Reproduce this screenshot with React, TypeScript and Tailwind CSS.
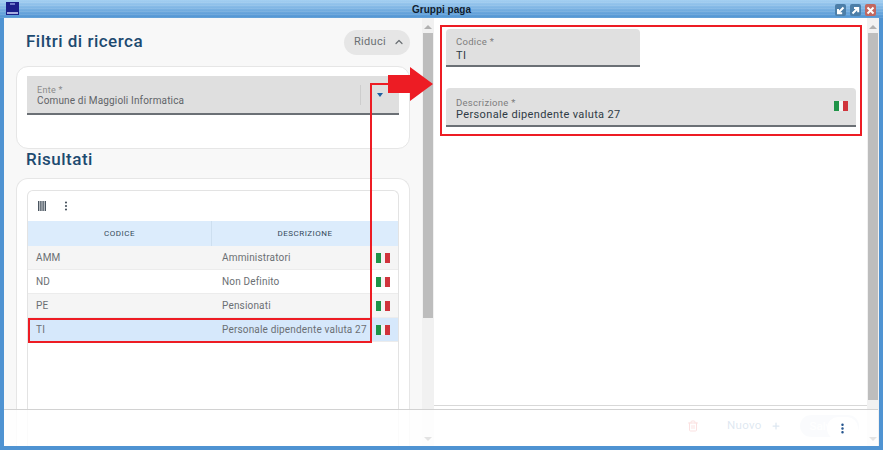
import { ChevronUp, Plus, Trash2, EllipsisVertical } from "lucide-react";

const rows = [
  { code: "AMM", desc: "Amministratori", bg: "bg-[#f5f5f5]" },
  { code: "ND", desc: "Non Definito", bg: "bg-white" },
  { code: "PE", desc: "Pensionati", bg: "bg-[#f5f5f5]" },
  { code: "TI", desc: "Personale dipendente valuta 27", bg: "bg-[#d6e8fb]" },
];

const Flag = () => (
  <div className="flex h-[10px] w-[14px] shrink-0">
    <div className="flex-1 bg-[#1f9448]" />
    <div className="flex-1 bg-[#f4f4f4]" />
    <div className="flex-1 bg-[#d0343c]" />
  </div>
);

const Thumb = ({ h }: { h: string }) => (
  <div className="flex w-[12px] shrink-0 flex-col bg-[#f1f1f1]">
    <div className="flex h-[15px] items-center justify-center pt-[2px]">
      <div className="h-0 w-0 border-x-[4px] border-b-[4px] border-x-transparent border-b-[#b0b0b0]" />
    </div>
    <div className={`${h} mx-[1px] bg-[#bdbdbd]`} />
    <div className="flex-1" />
    <div className="flex h-[14px] items-center justify-center">
      <div className="h-0 w-0 border-x-[4px] border-t-[4px] border-x-transparent border-t-[#444]" />
    </div>
  </div>
);

const Field = ({ label, value, className, flag, gap }: { label: string; value: string; className: string; flag?: boolean; gap?: string }) => (
  <div className={`relative rounded-t-[4px] border-b-2 border-[#6b7075] bg-[#e0e0e0] pl-[10px] ${className}`}>
    <div className={`text-[9.5px] leading-[11px] tracking-[0.3px] text-[#7d7d7d] ${gap ?? ""}`}>{label}</div>
    <div className="text-[11px] leading-[13px] tracking-[0.37px] text-[#2f3b45]">{value}</div>
    {flag && (
      <div className="absolute right-[8px] top-[13px]">
        <Flag />
      </div>
    )}
  </div>
);

const WinButton = ({ bg, d }: { bg: string; d: string }) => (
  <div className={`flex h-[12px] w-[11px] items-center justify-center rounded-[2px] ${bg}`}>
    <svg width="9" height="9" viewBox="0 0 9 9" fill="none" stroke="white" strokeWidth="2">
      <path d={d} />
    </svg>
  </div>
);

const App = () => {
  return (
    <div
      className="relative flex h-[450px] w-[883px] flex-col overflow-hidden bg-[#4f93d2]"
      style={{ fontFamily: "Roboto, 'Liberation Sans', sans-serif" }}
    >
      {/* title bar */}
      <div className="relative flex h-[18px] shrink-0 items-center justify-center bg-[repeating-linear-gradient(to_bottom,transparent_0px,transparent_2px,rgba(255,255,255,0.1)_2px,rgba(255,255,255,0.1)_3px),linear-gradient(to_bottom,#a5d0f2,#4f93d2)]">
        <div className="absolute left-[6px] top-[2px] flex h-[13px] w-[13px] flex-col items-center justify-between bg-[#1b1f8a] py-[1px]">
          <div className="h-[2px] w-[5px] bg-[#6f78c8]" />
          <div className="h-[2px] w-[11px] bg-[#a9aee0]" />
        </div>
        <span className="text-[10px] font-bold text-[#10202e]" style={{ fontFamily: "'Liberation Sans', sans-serif" }}>
          Gruppi paga
        </span>
        <div className="absolute right-[7px] top-[4px] flex gap-[4px]">
          <WinButton bg="bg-[#4c7ea8]" d="M7.5 1.5 2 7M2 3v4.2h4.2" />
          <WinButton bg="bg-[#4c7ea8]" d="M1.5 7.5 7 2M3 2h4.2v4.2" />
          <WinButton bg="bg-[#c2675f]" d="M1.5 1.5l6 6M7.5 1.5l-6 6" />
        </div>
      </div>

      {/* window body */}
      <div className="mx-[4px] mb-[4px] flex min-h-0 flex-1 bg-white">
        {/* left pane */}
        <div className="flex w-[418px] shrink-0 flex-col bg-[#f8f8f8] pl-[12px] pr-[12px]">
          <div className="flex h-[48px] shrink-0 items-center justify-between pl-[10px]">
            <h2 className="text-[17px] font-medium tracking-[0.5px] text-[#1d4a70]">Filtri di ricerca</h2>
            <div className="flex h-[25px] w-[66px] items-center gap-[7px] rounded-full bg-[#e6e6e6] pl-[10px] text-[11px] tracking-[0.3px] text-[#6a6f73]">
              Riduci
              <ChevronUp size={12} strokeWidth={2.4} />
            </div>
          </div>

          <div className="h-[83px] shrink-0 rounded-[12px] border border-[#e6e6e6] bg-white px-[10px] pt-[9px]">
            <div className="relative h-[39px] border-b-2 border-[#6b7075] bg-[#dfdfdf] pl-[10px] pt-[9px]">
              <div className="text-[9px] leading-[10px] tracking-[0.3px] text-[#8a8a8a]">Ente *</div>
              <div className="text-[10px] leading-[12px] tracking-[0.15px] text-[#5f6468]">Comune di Maggioli Informatica</div>
              <div className="absolute right-[38px] top-[9px] h-[20px] w-px bg-[#cdcdcd]" />
              <div className="absolute right-[16px] top-[17px] h-0 w-0 border-x-[3px] border-t-[4px] border-x-transparent border-t-[#1d5fa0]" />
            </div>
          </div>

          <h2 className="h-[29px] shrink-0 pl-[10px] text-[17px] font-medium leading-[20px] tracking-[0.5px] text-[#1d4a70]">Risultati</h2>

          <div className="flex-1 rounded-t-[12px] border border-b-0 border-[#e6e6e6] bg-white px-[10px] pt-[11px]">
            <div className="h-full rounded-t-[6px] border-x border-t border-[#e3e3e3]">
              <div className="flex h-[30px] items-center gap-[20px] pl-[10px] text-[#4a5560]">
                <svg width="8" height="10" viewBox="0 0 8 10" fill="currentColor">
                  <rect x="0" y="0" width="1.4" height="10" />
                  <rect x="2.2" y="0" width="1.4" height="10" />
                  <rect x="4.4" y="0" width="1.4" height="10" />
                  <rect x="6.6" y="0" width="1.4" height="10" />
                </svg>
                <EllipsisVertical size={12} strokeWidth={2.4} className="-ml-[6px]" />
              </div>
              <div className="grid h-[25px] grid-cols-[184px_1fr] items-center bg-[#dcecfc] text-[8px] tracking-[0.5px] text-[#34495a]">
                <div className="flex h-full items-center justify-center border-r border-[#cddff0]">CODICE</div>
                <div className="text-center">DESCRIZIONE</div>
              </div>
              {rows.map((r) => (
                <div key={r.code} className={`grid h-[24px] grid-cols-[186px_154px_1fr] items-center border-b border-[#ececec] pl-[8px] text-[10px] tracking-[0.17px] text-[#6b6f73] ${r.bg}`}>
                  <div>{r.code}</div>
                  <div className="whitespace-nowrap">{r.desc}</div>
                  <Flag />
                </div>
              ))}
            </div>
          </div>
        </div>

        <Thumb h="h-[285px]" />

        {/* right pane */}
        <div className="flex min-w-0 flex-1 flex-col bg-white">
          <div className="flex-1 pl-[12px] pt-[11px]">
            <Field label="Codice *" value="TI" gap="mb-[2px]" className="h-[38px] w-[194px] pt-[7px]" />
            <Field label="Descrizione *" value="Personale dipendente valuta 27" className="mt-[21px] h-[39px] w-[410px] pt-[9px]" flag />
          </div>
          <div className="flex h-[41px] shrink-0 items-center border-t border-[#d8d8d8] pr-[8px]">
            <div className="ml-[253px] text-[#e53935]">
              <Trash2 size={12} />
            </div>
            <div className="ml-[28px] flex items-center gap-[9px] text-[11.5px] tracking-[0.3px] text-[#1d5fa0]">
              Nuovo
              <Plus size={10} strokeWidth={3} />
            </div>
            <div className="ml-[19px] h-[22px] w-[62px] rounded-full bg-[#dde7f1] pl-[10px] text-[11.5px] leading-[22px] text-white">Salva</div>
          </div>
        </div>

        <Thumb h="h-[367px]" />
      </div>

      {/* faded footer veil */}
      <div className="absolute bottom-[4px] left-[4px] right-[5px] h-[37px] border-t border-[#d2d2d2] bg-white/85" />
      <div className="absolute bottom-[10px] left-[827px] flex h-[23px] w-[31px] items-center justify-center rounded-full bg-white text-[#1d4f8a]">
        <EllipsisVertical size={13} strokeWidth={2.6} />
      </div>

      {/* red callouts over the screenshot */}
      <div className="absolute left-[440px] top-[25px] h-[111px] w-[422px] border-2 border-[#ed1c24]" />
      <div className="absolute left-[28px] top-[318px] h-[25px] w-[344px] border-2 border-[#ed1c24]" />
      <div className="absolute left-[370px] top-[83px] h-[236px] w-[2px] bg-[#ed1c24]" />
      <div className="absolute left-[370px] top-[83px] h-[2px] w-[20px] bg-[#ed1c24]" />
      <svg className="absolute left-[388px] top-[67px]" width="46" height="35" viewBox="0 0 46 35">
        <polygon points="0,8 22,8 22,0 45,17 22,34 22,26 0,26" fill="#ed1c24" />
      </svg>
    </div>
  );
};

export default App;
